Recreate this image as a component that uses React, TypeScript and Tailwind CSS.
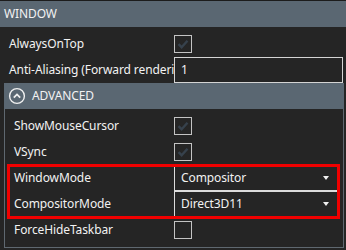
import React from "react";

function Check({ checked }: { checked: boolean }) {
  return (
    <div className="w-[18px] h-[18px] border border-[#c4c4c4] flex items-center justify-center">
      {checked && (
        <svg width="14" height="14" viewBox="0 0 14 14">
          <path d="M2.5 7.2 L5.6 10.2 L11.5 3.8" fill="none" stroke="#36414c" strokeWidth="2.4" />
        </svg>
      )}
    </div>
  );
}

function Combo({ value }: { value: string }) {
  return (
    <div className="h-[26px] border border-[#dcdcdc] flex items-center pl-[6px] pr-[9px]">
      <span className="flex-1">{value}</span>
      <svg width="6" height="4" viewBox="0 0 6 4">
        <path d="M0 0 L6 0 L3 4 Z" fill="#f0f0f0" />
      </svg>
    </div>
  );
}

export default function App() {
  return (
    <div className="relative w-[346px] h-[250px] overflow-hidden bg-[#252525] border-t border-[#1c1c1c] text-[12px] text-[#f2f2f2] font-['Noto_Sans',sans-serif] tracking-[-0.1px]">
      <div className="h-[26px] bg-[#5a6772] flex items-center pl-[4px]">WINDOW</div>
      <div className="mt-[4px] pr-[3px]">
        <div className="flex h-[26px] items-center">
          <div className="w-[174px] shrink-0 pl-[9px] overflow-hidden whitespace-nowrap pr-[5px]">AlwaysOnTop</div>
          <Check checked />
        </div>
        <div className="flex h-[26px] items-center">
          <div className="w-[174px] shrink-0 pl-[9px] overflow-hidden whitespace-nowrap pr-[5px]">
            Anti-Aliasing (Forward rendering)
          </div>
          <div className="flex-1 h-[26px] border border-[#d4d4d4] flex items-center pl-[6px]">1</div>
        </div>
      </div>
      <div className="ml-[4px] mr-[2px] h-[165px] border-x border-b border-[#5f6870]">
        <div className="h-[26px] -mx-[1px] bg-[#5a6772] flex items-center pl-[4px] gap-[6px]">
          <svg width="18" height="18" viewBox="0 0 18 18">
            <circle cx="9" cy="9" r="7.4" fill="none" stroke="#f0f0f0" strokeWidth="1.4" />
            <path d="M5.8 10.6 L9 7.4 L12.2 10.6" fill="none" stroke="#f0f0f0" strokeWidth="1.8" />
          </svg>
          <span>ADVANCED</span>
        </div>
        <div className="mt-[4px] pr-[4px]">
          <div className="flex h-[26px] items-center">
            <div className="w-[169px] shrink-0 pl-[9px]">ShowMouseCursor</div>
            <Check checked />
          </div>
          <div className="flex h-[26px] items-center">
            <div className="w-[169px] shrink-0 pl-[9px]">VSync</div>
            <Check checked />
          </div>
          <div className="flex h-[26px] items-center">
            <div className="w-[169px] shrink-0 pl-[9px]">WindowMode</div>
            <div className="flex-1">
              <Combo value="Compositor" />
            </div>
          </div>
          <div className="flex h-[26px] items-center">
            <div className="w-[169px] shrink-0 pl-[9px]">CompositorMode</div>
            <div className="flex-1">
              <Combo value="Direct3D11" />
            </div>
          </div>
          <div className="flex h-[26px] items-center">
            <div className="w-[169px] shrink-0 pl-[9px]">ForceHideTaskbar</div>
            <Check checked={false} />
          </div>
        </div>
      </div>
      <div className="absolute left-[7px] top-[163px] w-[333px] h-[55px] border-[3px] border-[#f00000]" />
    </div>
  );
}
